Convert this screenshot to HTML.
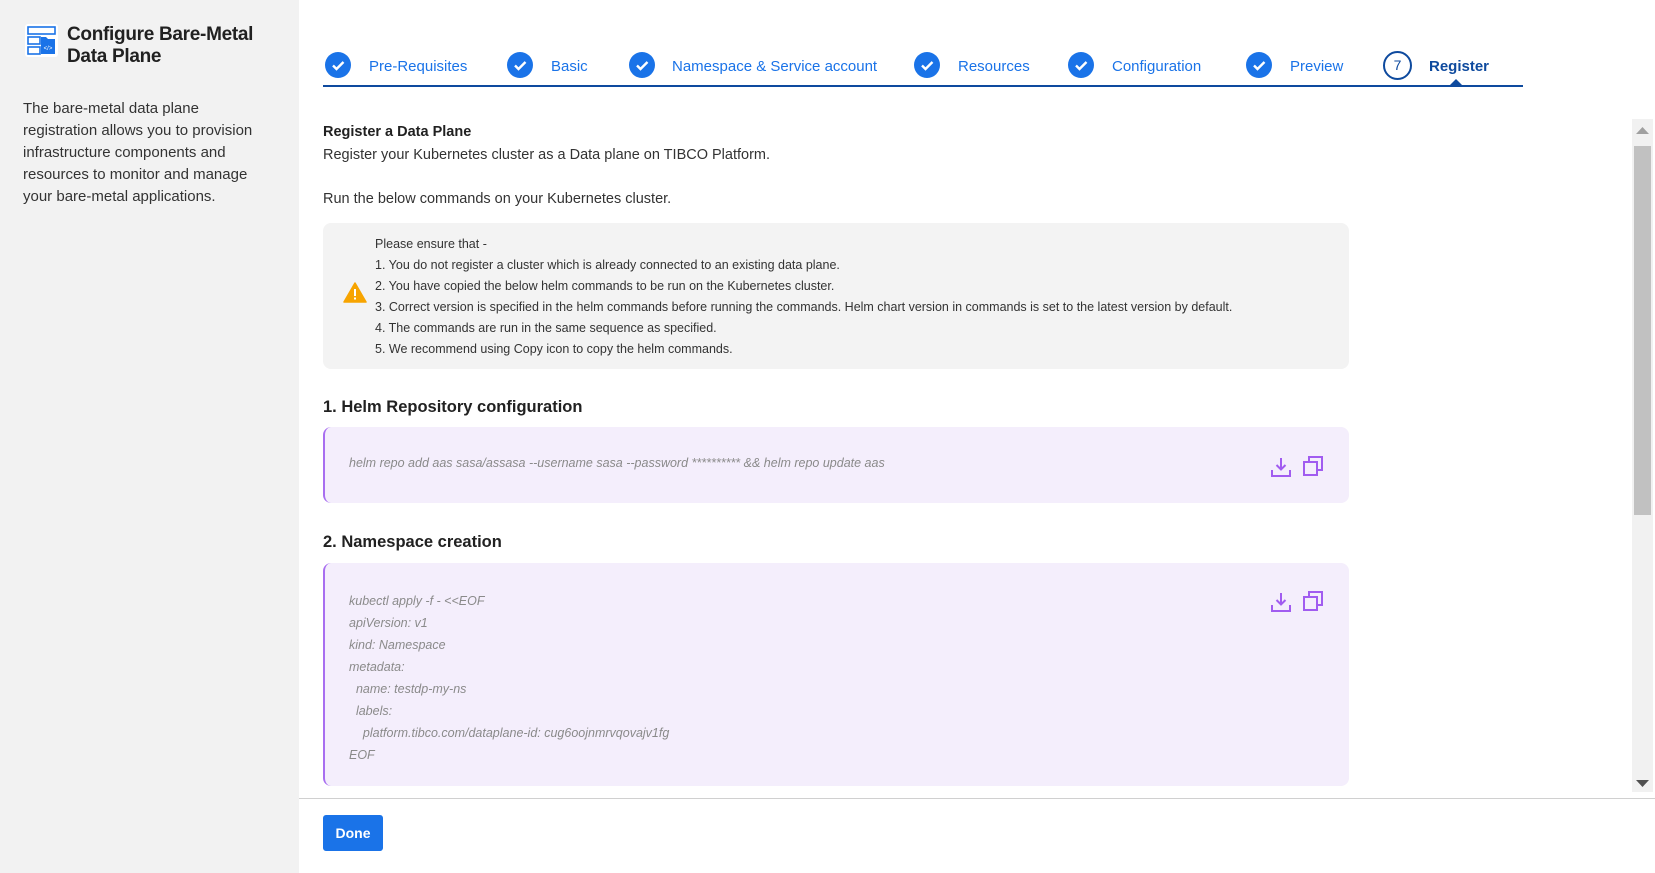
<!DOCTYPE html>
<html><head><meta charset="utf-8"><style>
*{box-sizing:border-box;margin:0;padding:0}
body{width:1655px;height:873px;overflow:hidden;font-family:"Liberation Sans",sans-serif;background:#fff;position:relative;color:#212121}
.side{position:absolute;left:0;top:0;width:299px;height:873px;background:#f2f2f2}
.side .ttl{position:absolute;left:67px;top:24px;font-size:19px;font-weight:bold;line-height:22px;color:#212121;letter-spacing:-0.3px}
.side .desc{position:absolute;left:23px;top:98px;width:270px;font-size:15px;line-height:22px;color:#333;white-space:nowrap}
.step{position:absolute;top:52px;height:26px}
.circ{position:absolute;width:26px;height:26px;border-radius:50%;background:#1a73e8;top:0}
.lbl{position:absolute;top:6px;font-size:15px;color:#1a73e8;white-space:nowrap}
.line{position:absolute;left:323px;top:85px;width:1200px;height:2px;background:#0e4a9e}
.abs{position:absolute}
.alert{position:absolute;left:323px;top:223px;width:1026px;height:146px;background:#f3f3f3;border-radius:8px}
.alert div{position:absolute;left:52px;font-size:12.5px;color:#333;white-space:nowrap}
.code{position:absolute;left:323px;width:1026px;background:#f4eefc;border-radius:8px;border-left:2px solid #a86ef0}
.code .t{position:absolute;left:24px;font-size:12.5px;font-style:italic;color:#8a8a8a;white-space:pre}
h3{position:absolute;left:323px;font-size:16.5px;font-weight:bold;color:#212121}
.sb{position:absolute;left:1632px;top:119px;width:21px;height:673px;background:#f1f1f1}
.thumb{position:absolute;left:1634px;top:146px;width:17px;height:369px;background:#c1c1c1}
.foot{position:absolute;left:299px;top:798px;width:1356px;height:75px;border-top:1px solid #d0d0d0;background:#fff}
.done{position:absolute;left:323px;top:815px;width:60px;height:36px;background:#1a73e8;border-radius:3px;color:#fff;font-weight:bold;font-size:14px;line-height:36px;text-align:center}
</style></head><body>
<div class="side">
<svg class="abs" style="left:25px;top:24px" width="33" height="33" viewBox="0 0 33 33"><rect x="0" y="0" width="33" height="33" rx="3" fill="#fff"/><rect x="3" y="3" width="27" height="7" fill="none" stroke="#1a73e8" stroke-width="1.6"/><rect x="3" y="13" width="12" height="7" fill="none" stroke="#1a73e8" stroke-width="1.6"/><rect x="3" y="23" width="12" height="7" fill="none" stroke="#1a73e8" stroke-width="1.6"/><path d="M16 13h5l2 2h7v15H16z" fill="#1a73e8"/><text x="23" y="26" font-size="6" fill="#fff" text-anchor="middle" font-family="Liberation Sans">&lt;/&gt;</text></svg>
<div class="ttl">Configure Bare-Metal<br>Data Plane</div>
<div class="desc">The bare-metal data plane<br>registration allows you to provision<br>infrastructure components and<br>resources to monitor and manage<br>your bare-metal applications.</div>
</div>

<div class="step" style="left:325px"><div class="circ"></div><svg class="abs" style="left:0;top:0" width="26" height="26"><path d="M8 13.5l3.5 3.5 7-7" stroke="#fff" stroke-width="2.4" fill="none"/></svg><div class="lbl" style="left:44px">Pre-Requisites</div></div>
<div class="step" style="left:507px"><div class="circ"></div><svg class="abs" width="26" height="26"><path d="M8 13.5l3.5 3.5 7-7" stroke="#fff" stroke-width="2.4" fill="none"/></svg><div class="lbl" style="left:44px">Basic</div></div>
<div class="step" style="left:629px"><div class="circ"></div><svg class="abs" width="26" height="26"><path d="M8 13.5l3.5 3.5 7-7" stroke="#fff" stroke-width="2.4" fill="none"/></svg><div class="lbl" style="left:43px">Namespace &amp; Service account</div></div>
<div class="step" style="left:914px"><div class="circ"></div><svg class="abs" width="26" height="26"><path d="M8 13.5l3.5 3.5 7-7" stroke="#fff" stroke-width="2.4" fill="none"/></svg><div class="lbl" style="left:44px">Resources</div></div>
<div class="step" style="left:1068px"><div class="circ"></div><svg class="abs" width="26" height="26"><path d="M8 13.5l3.5 3.5 7-7" stroke="#fff" stroke-width="2.4" fill="none"/></svg><div class="lbl" style="left:44px">Configuration</div></div>
<div class="step" style="left:1246px"><div class="circ"></div><svg class="abs" width="26" height="26"><path d="M8 13.5l3.5 3.5 7-7" stroke="#fff" stroke-width="2.4" fill="none"/></svg><div class="lbl" style="left:44px">Preview</div></div>
<div class="step" style="left:1383px"><div class="circ" style="background:#fff;border:2px solid #0e4a9e;width:29px;height:29px;top:-1px;color:#0e4a9e;font-size:14px;text-align:center;line-height:25px">7</div><div class="lbl" style="left:46px;color:#0e4a9e;font-weight:bold">Register</div></div>
<div class="line"></div>
<svg class="abs" style="left:1449px;top:79px" width="14" height="7"><path d="M0 7L7 0L14 7z" fill="#0e4a9e"/></svg>

<div class="abs" style="left:323px;top:124px;font-size:14.5px;font-weight:bold;color:#212121">Register a Data Plane</div>
<div class="abs" style="left:323px;top:147px;font-size:14.5px;color:#333">Register your Kubernetes cluster as a Data plane on TIBCO Platform.</div>
<div class="abs" style="left:323px;top:191px;font-size:14.5px;color:#333">Run the below commands on your Kubernetes cluster.</div>

<div class="alert">
<svg class="abs" style="left:20px;top:59px" width="24" height="21" viewBox="0 0 24 21"><path d="M12 1L23 20H1z" fill="#f7a400" stroke="#f7a400" stroke-linejoin="round" stroke-width="1.5"/><rect x="11" y="7" width="2" height="7" fill="#fff"/><rect x="11" y="15.5" width="2" height="2" fill="#fff"/></svg>
<div style="top:14px">Please ensure that -</div>
<div style="top:35px">1. You do not register a cluster which is already connected to an existing data plane.</div>
<div style="top:56px">2. You have copied the below helm commands to be run on the Kubernetes cluster.</div>
<div style="top:77px">3. Correct version is specified in the helm commands before running the commands. Helm chart version in commands is set to the latest version by default.</div>
<div style="top:98px">4. The commands are run in the same sequence as specified.</div>
<div style="top:119px">5. We recommend using Copy icon to copy the helm commands.</div>
</div>

<h3 style="top:398px">1. Helm Repository configuration</h3>
<div class="code" style="top:427px;height:76px">
<div class="t" style="top:29px">helm repo add aas sasa/assasa --username sasa --password ********** &amp;&amp; helm repo update aas</div>
<svg class="abs" style="left:945px;top:29px" width="22" height="22" viewBox="0 0 22 22"><path d="M11 2v11M6.5 9l4.5 4.5L15.5 9M2 14v6h18v-6" stroke="#a15cf0" stroke-width="2" fill="none"/></svg>
<svg class="abs" style="left:977px;top:28px" width="22" height="22" viewBox="0 0 22 22"><rect x="2" y="7" width="13" height="13" stroke="#a15cf0" stroke-width="2" fill="none"/><path d="M7 7V2h13v13h-5" stroke="#a15cf0" stroke-width="2" fill="none"/></svg>
</div>

<h3 style="top:533px">2. Namespace creation</h3>
<div class="code" style="top:563px;height:223px">
<div class="t" style="top:27px;line-height:22px">kubectl apply -f - &lt;&lt;EOF
apiVersion: v1
kind: Namespace
metadata:
  name: testdp-my-ns
  labels:
    platform.tibco.com/dataplane-id: cug6oojnmrvqovajv1fg
EOF</div>
<svg class="abs" style="left:945px;top:28px" width="22" height="22" viewBox="0 0 22 22"><path d="M11 2v11M6.5 9l4.5 4.5L15.5 9M2 14v6h18v-6" stroke="#a15cf0" stroke-width="2" fill="none"/></svg>
<svg class="abs" style="left:977px;top:27px" width="22" height="22" viewBox="0 0 22 22"><rect x="2" y="7" width="13" height="13" stroke="#a15cf0" stroke-width="2" fill="none"/><path d="M7 7V2h13v13h-5" stroke="#a15cf0" stroke-width="2" fill="none"/></svg>
</div>

<div class="sb"></div><div class="thumb"></div>
<svg class="abs" style="left:1636px;top:127px" width="13" height="7"><path d="M0 7L6.5 0L13 7z" fill="#a0a0a0"/></svg>
<svg class="abs" style="left:1636px;top:780px" width="13" height="7"><path d="M0 0L6.5 7L13 0z" fill="#505050"/></svg>

<div class="foot"></div>
<div class="done">Done</div>
</body></html>
